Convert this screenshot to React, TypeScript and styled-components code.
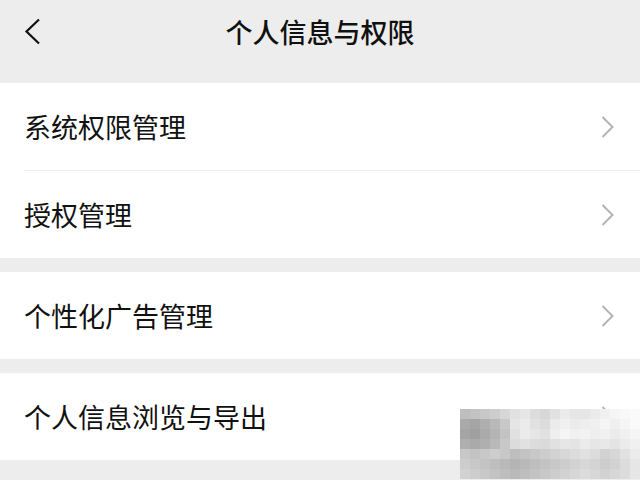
import styled, { createGlobalStyle } from 'styled-components'

const GlobalStyle = createGlobalStyle`
  html, body {
    margin: 0;
    padding: 0;
    background: #ededed;
  }
  body {
    font-family: "Noto Sans CJK SC", "Noto Sans", sans-serif;
    color: #111;
  }
`

const Page = styled.div`
  position: relative;
  width: 640px;
  height: 480px;
  overflow: hidden;
  background: #ededed;
`

const NavBar = styled.div`
  height: 62px;
  display: flex;
  align-items: center;
  justify-content: center;
  position: relative;
`

const BackButton = styled.div`
  position: absolute;
  left: 23px;
  top: 17px;
  width: 18px;
  height: 28px;
  display: flex;
  align-items: center;
  justify-content: center;
`

const Title = styled.div`
  font-size: 27px;
  font-weight: 500;
  letter-spacing: 0;
  line-height: 1;
  margin-top: 0;
`

const Group = styled.div<{ $gap: number }>`
  margin-top: ${(p) => p.$gap}px;
  background: #fff;
`

const Row = styled.div`
  height: 87px;
  display: flex;
  align-items: center;
  justify-content: space-between;
  padding: 0 26px 0 24px;
`

const Divider = styled.div`
  height: 1px;
  margin-left: 24px;
  background: #ececec;
`

const Label = styled.span`
  font-size: 27px;
  line-height: 1;
  color: #111;
`

const Mosaic = styled.svg`
  position: absolute;
  left: 460px;
  top: 409px;
`

const shades = [
  [190, 195, 200, 205, 215, 225, 230, 220, 215, 225, 235, 230, 230, 235, 240, 245, 248, 250],
  [170, 165, 175, 185, 200, 230, 235, 225, 220, 235, 240, 235, 238, 240, 245, 240, 245, 250],
  [165, 160, 170, 180, 195, 225, 235, 230, 225, 238, 245, 240, 242, 238, 240, 235, 240, 245],
  [175, 170, 175, 185, 200, 220, 225, 220, 218, 225, 230, 228, 235, 230, 232, 228, 235, 240],
  [200, 195, 200, 205, 200, 190, 195, 200, 205, 210, 215, 220, 225, 220, 210, 215, 225, 235],
  [205, 200, 195, 190, 185, 180, 185, 190, 195, 200, 205, 210, 215, 212, 205, 210, 220, 230],
  [210, 205, 200, 195, 190, 185, 190, 195, 200, 205, 210, 215, 220, 215, 210, 215, 220, 230],
]

function BackIcon() {
  return (
    <svg width="17" height="27" viewBox="0 0 17 27">
      <polyline points="15,1.5 2.5,13.5 15,25.5" fill="none" stroke="#111" strokeWidth="2.2" />
    </svg>
  )
}

function Chevron() {
  return (
    <svg width="13" height="22" viewBox="0 0 13 22">
      <polyline points="1.5,1 11.5,11 1.5,21" fill="none" stroke="#b3b3b3" strokeWidth="2" />
    </svg>
  )
}

const groups = [
  { gap: 21, items: ['系统权限管理', '授权管理'] },
  { gap: 14, items: ['个性化广告管理'] },
  { gap: 14, items: ['个人信息浏览与导出'] },
]

export default function App() {
  return (
    <Page>
      <GlobalStyle />
      <NavBar>
        <BackButton>
          <BackIcon />
        </BackButton>
        <Title>个人信息与权限</Title>
      </NavBar>
      {groups.map((g, gi) => (
        <Group key={gi} $gap={g.gap}>
          {g.items.map((item, i) => (
            <div key={item}>
              {i > 0 && <Divider />}
              <Row>
                <Label>{item}</Label>
                <Chevron />
              </Row>
            </div>
          ))}
        </Group>
      ))}
      <Mosaic width="180" height="71" viewBox="0 0 180 71">
        {shades.map((row, r) =>
          row.map((v, c) => (
            <rect key={`${r}-${c}`} x={c * 10} y={r * 10} width="10" height="10" fill={`rgb(${v},${v},${v})`} />
          ))
        )}
      </Mosaic>
    </Page>
  )
}
